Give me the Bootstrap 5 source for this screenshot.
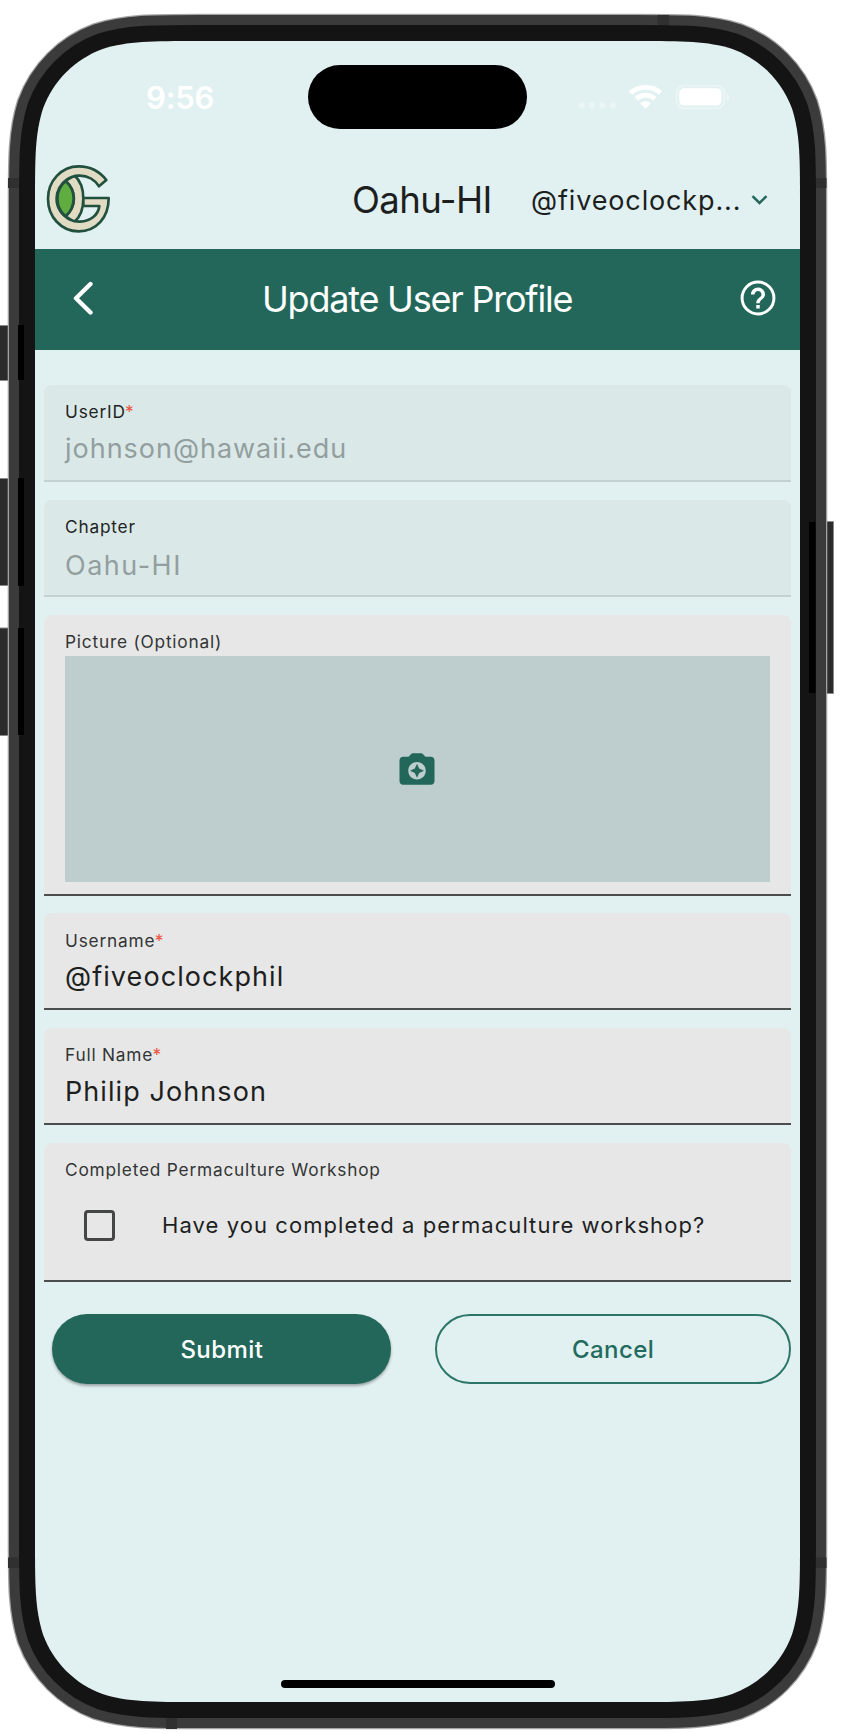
<!DOCTYPE html>
<html lang="en">
<head>
<meta charset="utf-8">
<meta name="viewport" content="width=device-width, initial-scale=1">
<title>Update User Profile</title>
<link href="https://cdn.jsdelivr.net/npm/bootstrap@5.3.0/dist/css/bootstrap.min.css" rel="stylesheet">
<style>
  :root { --gg-green: #23675b; --gg-mint: #e1f1f1; --gg-ink: #1d1f1f; }
  body { font-family: Inter, "Liberation Sans", sans-serif; background: #fff; color: var(--gg-ink); overflow: hidden; }
  .device { width: 847px; height: 1734px; }
  .device-frame { z-index: 0; }
  .screen { width: 765px; height: 1661px; margin: 41px 0 0 35px; z-index: 1; }
  svg { display: block; flex: none; }
  .t { white-space: nowrap; line-height: 1; flex: none; }

  .status { height: 112px; }
  .clock { width: 162px; margin-left: 111px; font-size: 31px; font-weight: 600; letter-spacing: -.2px; }
  .island { width: 219px; height: 64px; border-radius: 32px; background: #000; }
  .status-icons { margin-left: 50.6px; }

  .app-header { height: 96px; padding-bottom: 1.5px; }
  .logo { margin-bottom: 2.5px; }
  .chapter { width: 179px; margin-left: 231px; font-size: 36.5px; font-weight: 400; letter-spacing: -.6px; }
  .handle { width: 220px; font-size: 27px; letter-spacing: .86px; }

  .title-bar { height: 101px; background: var(--gg-green); padding-bottom: 2px; }
  .title-bar svg { margin-bottom: 1.5px; }
  .title-bar h1 { width: 475px; margin: 0 0 0 143px; font-size: 36px; font-weight: 400; letter-spacing: -1.22px; }

  .profile-form { padding: 35px 8.6px 0 9px; }
  .fld { border-bottom: 2px solid #4c4d4d; border-radius: 8px 8px 0 0; background: #e7e7e7; margin-bottom: 17.7px; height: 97.1px; padding: 17.4px 21px 0; }
  .fld.off { background: #dae9e8; border-color: #c3d1d1; }
  .fld label { display: block; font-size: 17.3px; font-weight: 400; line-height: 20px; letter-spacing: .79px; color: #333535; white-space: nowrap; }
  .fld.off label { color: #1f2424; }
  .fld i { font-style: normal; color: #ea5440; letter-spacing: 0; margin-left: -.6px; }
  .val { font-size: 27px; line-height: 34px; margin-top: 9.5px; letter-spacing: 1.08px; white-space: nowrap; font-weight: 400; }
  .off .val { color: #939e9e; letter-spacing: .98px; }
  .off .val.low { margin-top: 12px; letter-spacing: 1.5px; }
  .tall { height: 281.3px; margin-bottom: 17.3px; }
  .photo { height: 226px; margin-top: 3.6px; padding-right: .5px; background: #becdcd; }
  .check-card { height: 139px; }
  .check-line { margin-top: 29.5px; }
  .box { width: 31px; height: 31px; border: 3px solid #454646; border-radius: 4px; margin-left: 19px; }
  .ask { font-size: 22px; font-weight: 400; letter-spacing: 1.07px; margin-left: 47px; }

  .actions { padding-top: 14.5px; }
  .pill { height: 70px; border-radius: 35px; font-size: 24px; font-weight: 500; letter-spacing: .45px; padding: 2px 0 0; }
  .submit { width: 339px; margin-left: 8.4px; background: var(--gg-green); color: #fff; box-shadow: 0 2px 3px rgba(0,0,0,.32); }
  .cancel { width: 356.5px; color: #226b5e; border: 2px solid #2b7668; }
  .home-bar { width: 274px; height: 8px; border-radius: 4px; background: #000; margin-bottom: 14px; }
</style>
</head>
<body>
<div class="device position-relative d-flex">
  <!-- phone body: side buttons, metal rim, bezel, screen -->
  <svg class="device-frame position-absolute top-0 start-0" width="847" height="1734" viewBox="0 0 847 1734">
    <defs>
      <path id="scr" d="M198.6 41H636.4C683.5 41 707.1 41 732.4 49C760.1 59.1 781.9 80.9 792 108.6C800 133.9 800 157.5 800 204.6V1538.4C800 1585.5 800 1609.1 792 1634.4C781.9 1662.1 760.1 1683.9 732.4 1694C707.1 1702 683.5 1702 636.4 1702H198.6C151.5 1702 127.9 1702 102.6 1694C74.9 1683.9 53.1 1662.1 43 1634.4C35 1609.1 35 1585.5 35 1538.4V204.6C35 157.5 35 133.9 43 108.6C53.1 80.9 74.9 59.1 102.6 49C127.9 41 151.5 41 198.6 41Z"/>
    </defs>
    <g fill="#2b2b2b" stroke="#8a8a8a" stroke-width="1">
      <path d="M-2 325.5H12V380.5H-2ZM-2 478.5H12V585.5H-2ZM-2 628H12V735.5H-2ZM822 521.5H833.5V693.500H822Z"/>
    </g>
    <use href="#scr" fill="none" stroke="#a3a3a3" stroke-width="54.600"/>
    <use href="#scr" fill="none" stroke="#3b3b3b" stroke-width="52"/>
    <path fill="#303030" d="M8 178H19V188H8ZM8 1557.500H19V1568H8ZM816 178H826.500V188H816ZM816 1557.500H826.500V1568H816ZM657.500 15H669V26H657.500ZM166 1718H177V1729H166Z"/>
    <use href="#scr" fill="none" stroke="#141414" stroke-width="32"/>
    <path fill="#000" d="M18 325H24V380H18ZM18 478H24V586H18ZM18 628H24V735H18ZM809 522H815.500V693H809Z"/>
    <use href="#scr" fill="#e1f1f1"/>
  </svg>

  <main class="screen position-relative d-flex flex-column">
    <div class="status d-flex align-items-center">
      <div class="clock t text-white">9:56</div>
      <div class="island"></div>
      <svg class="status-icons" width="152" height="24" viewBox="0 0 152 24" fill="#fff">
        <g opacity=".3"><circle cx="3.700" cy="20.500" r="3.200"/><circle cx="14" cy="20.500" r="3.200"/><circle cx="24.500" cy="20.500" r="3.200"/><circle cx="34.900" cy="20.500" r="3.200"/></g>
        <g fill="none" stroke="#fff" stroke-width="4.800"><path d="M52.500 8C60.500 .6 74.500 .6 82.500 8"/><path d="M58.200 13.700C63.500 8.900 71.500 8.900 76.800 13.700"/></g>
        <path d="M67.500 23.700L62.200 18.500C65 15.600 70 15.600 72.800 18.500Z"/>
        <rect x="98.700" y=".7" width="47.600" height="22.600" rx="7.500" fill="none" stroke="#fff" stroke-width="1.600" opacity=".4"/>
        <rect x="101.200" y="3.200" width="42.300" height="17.400" rx="5"/>
        <path d="M149 8.500Q151.500 9.500 151.500 12.200T149 15.800Z" opacity=".45"/>
      </svg>
    </div>

    <header class="app-header d-flex align-items-center">
      <svg class="logo" width="86" height="86" viewBox="15 18 258 258" stroke="#22503f" stroke-width="8" stroke-linejoin="round">
        <path fill="#e2dbc4" d="M107 93L133 76C169 108 169 184 133 216L107 199C140 168 140 123 107 93Z"/>
        <path fill="#5fad41" d="M107 93C139 122 139 169 107 199C74 172 74 120 107 93Z"/>
        <path fill="#e2dbc4" d="M229 90L207 109A69 69 0 1 0 150 215C182 213 205 195 208 168H160V144H236C236 202 200 244 146 244C93 244 54 200 54 146C54 93 94 49 146 49C182 49 208 63 229 90Z"/>
      </svg>
      <div class="chapter t">Oahu-HI</div>
      <div class="handle t">@fiveoclockp...</div>
      <svg width="17" height="10" viewBox="0 0 17 10" fill="none" stroke="#23675b" stroke-width="2.500"><path d="M1.500 1.200L8.500 8L15.500 1.200"/></svg>
    </header>

    <div class="title-bar d-flex align-items-center text-white">
      <svg class="ms-4" width="60" height="34" viewBox="0 0 60 34" fill="none" stroke="#fff" stroke-width="4.400" stroke-linecap="round" stroke-linejoin="round"><path d="M31.500 3L17 17.300L31.500 31.500"/></svg>
      <h1 class="t">Update User Profile</h1>
      <svg width="42" height="42" viewBox="0 0 24 24" fill="#fff"><circle cx="12" cy="12" r="9.100" fill="none" stroke="#fff" stroke-width="1.700"/><path d="M11 18h2v-2h-2v2zm1-12c-2.210 0-4 1.790-4 4h2c0-1.100.9-2 2-2s2 .9 2 2c0 2-3 1.750-3 5h2c0-2.250 3-2.500 3-5 0-2.210-1.790-4-4-4z"/></svg>
    </div>

    <form class="profile-form">
      <div class="fld off"><label>UserID<i>*</i></label><div class="val">johnson@hawaii.edu</div></div>
      <div class="fld off"><label>Chapter</label><div class="val low">Oahu-HI</div></div>
      <div class="fld tall">
        <label>Picture (Optional)</label>
        <div class="photo d-flex align-items-center justify-content-center">
          <svg width="42" height="42" viewBox="0 0 24 24" fill="#23675b" fill-rule="evenodd"><path d="M9.900 3C9.300 3 8.800 3.200 8.400 3.700L7.170 5H4c-1.100 0-2 .9-2 2v12c0 1.100.9 2 2 2h16c1.100 0 2-.9 2-2V7c0-1.100-.9-2-2-2h-3.170L15.600 3.700C15.200 3.200 14.700 3 14.100 3ZM12 18c-2.760 0-5-2.240-5-5s2.240-5 5-5 5 2.240 5 5-2.240 5-5 5zM12 17l1.250-2.750L16 13l-2.750-1.250L12 9l-1.250 2.750L8 13l2.750 1.250z"/></svg>
        </div>
      </div>
      <div class="fld"><label>Username<i>*</i></label><div class="val">@fiveoclockphil</div></div>
      <div class="fld"><label>Full Name<i>*</i></label><div class="val">Philip Johnson</div></div>
      <div class="fld check-card">
        <label>Completed Permaculture Workshop</label>
        <div class="check-line d-flex align-items-center"><span class="box"></span><span class="ask t">Have you completed a permaculture workshop?</span></div>
      </div>
      <div class="actions d-flex justify-content-between">
        <button type="button" class="btn pill submit">Submit</button>
        <button type="button" class="btn pill cancel">Cancel</button>
      </div>
    </form>
    <div class="home-bar mt-auto align-self-center"></div>
  </main>
</div>
<script src="https://cdn.jsdelivr.net/npm/bootstrap@5.3.0/dist/js/bootstrap.bundle.min.js"></script>
</body>
</html>
